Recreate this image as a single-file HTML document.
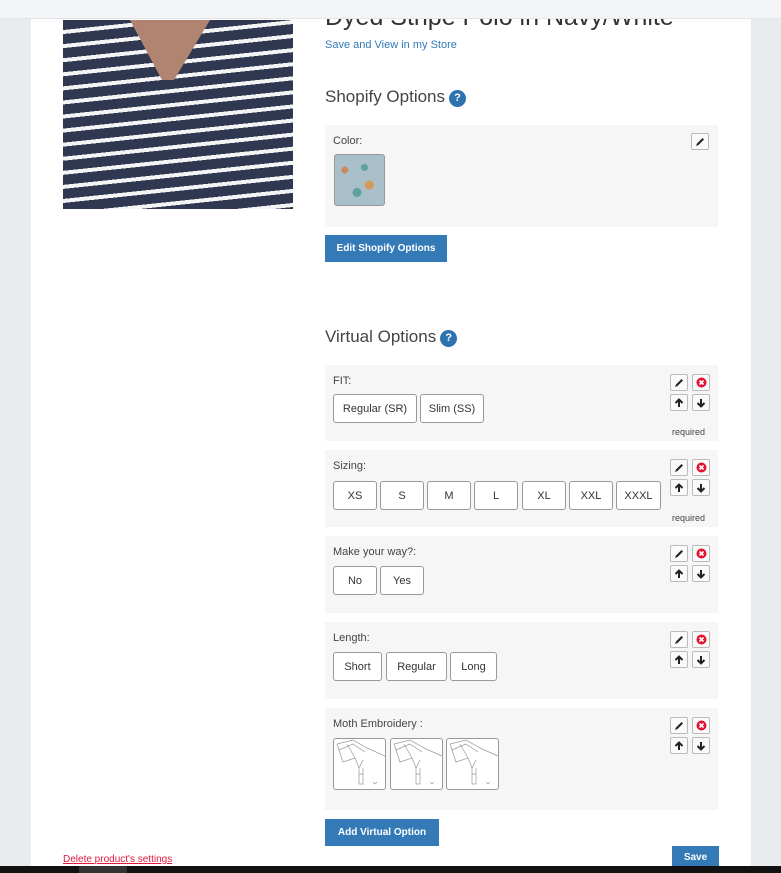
<!DOCTYPE html>
<html><head><meta charset="utf-8"><style>
*{box-sizing:border-box;margin:0;padding:0}
body{width:781px;height:873px;position:relative;overflow:hidden;background:#e9ecef;font-family:"Liberation Sans",sans-serif;color:#333}
.a{position:absolute}
.card{left:31px;top:0;width:720px;height:873px;background:#fff}
.top{left:0;top:0;width:781px;height:19px;background:#f4f5f7;border-bottom:1px solid #e3e5e8;z-index:5}
.panel{left:325px;width:393px;background:#f6f6f6}
.lbl{font-size:11px;color:#444}
.ob{position:absolute;height:29px;border:1px solid #999;border-radius:3px;background:#fff;font-size:11px;color:#333;display:flex;align-items:center;justify-content:center}
.ib{position:absolute;width:18px;height:17px;border:1px solid #bbb;border-radius:2px;background:#fafafa;display:flex;align-items:center;justify-content:center}
.btn{background:#337ab7;color:#fff;font-size:10px;font-weight:bold;display:flex;align-items:center;justify-content:center}
.req{font-size:9px;color:#444}
h2{position:absolute;font-weight:normal;font-size:17px;color:#444}
.q{display:inline-block;width:17px;height:17px;border-radius:50%;background:#2f72b0;color:#fff;font-size:11px;font-weight:bold;text-align:center;line-height:17px;vertical-align:1px;margin-left:4px}
.shirt{position:absolute;top:738px;width:53px;height:52px;border:1px solid #999;border-radius:3px;background:#fff}
</style></head><body>
<div class="a card"></div>
<div class="a top"></div>
<div class="a" style="left:63px;top:20px;width:230px;height:189px;background:repeating-linear-gradient(174deg,#2f3850 0 10px,#f4f4f4 10px 14px)"></div>
<div class="a" style="left:130px;top:20px;width:80px;height:60px;background:#b08470;clip-path:polygon(0 0,100% 0,55% 100%,40% 100%)"></div>
<div class="a" style="left:325px;top:3px;font-size:25px;color:#333;white-space:nowrap">Dyed Stripe Polo in Navy/White</div>
<div class="a" style="left:325px;top:39px;font-size:11px;color:#337ab7">Save and View in my Store</div>
<h2 style="left:325px;top:87px">Shopify Options<span class="q">?</span></h2>
<div class="a panel" style="top:125px;height:102px"></div>
<div class="a lbl" style="left:333px;top:135px">Color:</div>
<div class="a" style="left:334px;top:154px;width:51px;height:52px;border:1px solid #999;border-radius:3px;background:radial-gradient(circle at 20% 30%,#c7895a 0 3px,transparent 4px),radial-gradient(circle at 70% 60%,#d19a5a 0 4px,transparent 5px),radial-gradient(circle at 45% 75%,#5fa0a3 0 4px,transparent 5px),radial-gradient(circle at 60% 25%,#5fa0a3 0 3px,transparent 4px),#a9c0cb"></div>
<div class="ib pen" style="left:691px;top:133px"></div>
<div class="a btn" style="left:325px;top:235px;width:122px;height:27px">Edit Shopify Options</div>
<h2 style="left:325px;top:327px">Virtual Options<span class="q">?</span></h2>

<div class="a panel" style="top:365px;height:76px"></div>
<div class="a lbl" style="left:333px;top:375px">FIT:</div>
<div class="ob" style="left:333px;top:394px;width:84px">Regular (SR)</div>
<div class="ob" style="left:420px;top:394px;width:64px">Slim (SS)</div>
<div class="a req" style="left:672px;top:427px">required</div>

<div class="a panel" style="top:450px;height:77px"></div>
<div class="a lbl" style="left:333px;top:460px">Sizing:</div>
<div class="ob" style="left:333px;top:481px;width:44px">XS</div>
<div class="ob" style="left:380px;top:481px;width:44px">S</div>
<div class="ob" style="left:427px;top:481px;width:44px">M</div>
<div class="ob" style="left:474px;top:481px;width:44px">L</div>
<div class="ob" style="left:522px;top:481px;width:44px">XL</div>
<div class="ob" style="left:569px;top:481px;width:44px">XXL</div>
<div class="ob" style="left:616px;top:481px;width:45px">XXXL</div>
<div class="a req" style="left:672px;top:513px">required</div>

<div class="a panel" style="top:536px;height:77px"></div>
<div class="a lbl" style="left:333px;top:546px">Make your way?:</div>
<div class="ob" style="left:333px;top:566px;width:44px">No</div>
<div class="ob" style="left:380px;top:566px;width:44px">Yes</div>

<div class="a panel" style="top:622px;height:77px"></div>
<div class="a lbl" style="left:333px;top:632px">Length:</div>
<div class="ob" style="left:333px;top:652px;width:49px">Short</div>
<div class="ob" style="left:386px;top:652px;width:61px">Regular</div>
<div class="ob" style="left:450px;top:652px;width:47px">Long</div>

<div class="a panel" style="top:708px;height:102px"></div>
<div class="a lbl" style="left:333px;top:718px">Moth Embroidery :</div>
<div class="shirt" style="left:333px"></div>
<div class="shirt" style="left:390px"></div>
<div class="shirt" style="left:446px"></div>
<svg class="a" style="left:333px;top:738px" width="170" height="52" fill="none" stroke="#999" stroke-width="0.7">
<g id="s"><path d="M4 6 L20 2 L34 10 L52 18 M6 12 L20 6 L32 14 M4 6 L10 24 L22 20 L26 30 L30 22 M14 6 L22 20 M26 30 V46 H30 V30 M26 36 H30 M40 44 l2 2 l2 -2"/></g>
<use href="#s" x="57"/><use href="#s" x="113"/>
</svg>

<div class="a btn" style="left:325px;top:819px;width:114px;height:27px">Add Virtual Option</div>
<div class="a btn" style="left:672px;top:846px;width:47px;height:22px">Save</div>
<div class="a" style="left:63px;top:854px;font-size:10px;color:#e0183c;text-decoration:underline">Delete product's settings</div>
<div class="a" style="left:0;top:866px;width:781px;height:7px;background:#111"></div>
<div class="a" style="left:79px;top:866px;width:48px;height:7px;background:#333"></div>

<div id="icons"></div>
<script>
var P='<svg width="10" height="10" viewBox="0 0 10 10"><path d="M1 9 L2 6.5 L7.5 1 L9 2.5 L3.5 8 Z" fill="#222"/></svg>';
var X='<svg width="11" height="11" viewBox="0 0 11 11"><circle cx="5.5" cy="5.5" r="5" fill="#e3122f"/><path d="M3.5 3.5 L7.5 7.5 M7.5 3.5 L3.5 7.5" stroke="#fff" stroke-width="1.6"/></svg>';
var U='<svg width="10" height="10" viewBox="0 0 10 10"><path d="M5 9 V2 M1.5 5 L5 1.5 L8.5 5" stroke="#222" stroke-width="2" fill="none"/></svg>';
var D='<svg width="10" height="10" viewBox="0 0 10 10"><path d="M5 1 V8 M1.5 5 L5 8.5 L8.5 5" stroke="#222" stroke-width="2" fill="none"/></svg>';
document.querySelector('.pen').innerHTML=P;
var ys=[374,459,545,631,717],h='';
ys.forEach(function(y){
h+='<div class="ib" style="left:670px;top:'+y+'px">'+P+'</div>';
h+='<div class="ib" style="left:692px;top:'+y+'px">'+X+'</div>';
h+='<div class="ib" style="left:670px;top:'+(y+20)+'px">'+U+'</div>';
h+='<div class="ib" style="left:692px;top:'+(y+20)+'px">'+D+'</div>';
});
document.getElementById('icons').innerHTML=h;
</script>
</body></html>
